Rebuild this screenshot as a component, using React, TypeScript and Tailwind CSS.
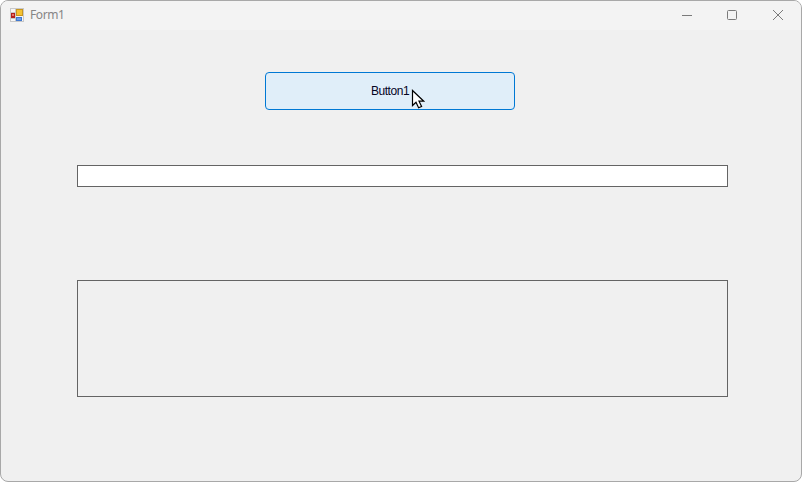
function FormIcon() {
    return (
        <svg width="14" height="14" viewBox="0 0 14 14" className="shrink-0">
            <rect x="0.5" y="0.5" width="13" height="13" fill="#f6f6f6" stroke="#c8c8c8" />
            <path d="M0 4.5H6M5.5 0V14M0 10.5H6" stroke="#c8c8c8" fill="none" />
            <rect x="1" y="5" width="4" height="5" fill="#b3201c" />
            <rect x="2" y="6" width="2" height="2" fill="#e8736a" />
            <rect x="6" y="1" width="7" height="7" fill="#c8961f" />
            <rect x="7" y="2" width="5" height="5" fill="#f4c232" />
            <rect x="6" y="9" width="6" height="4" fill="#3f78d0" />
            <rect x="7" y="10" width="4" height="2" fill="#6f9fe6" />
        </svg>
    );
}

function Cursor() {
    return (
        <svg width="14" height="20" viewBox="0 0 14 20" className="absolute left-[410px] top-[88px]">
            <path
                d="M1.5 1.5V16.5L5 13.2L7.6 18.8L10.6 17.5L8 12.2H12.8Z"
                fill="#ffffff"
                stroke="#000000"
                strokeWidth="1.2"
                strokeLinejoin="miter"
            />
        </svg>
    );
}

export default function App() {
    return (
        <div className="relative flex h-[482px] w-[802px] flex-col overflow-hidden rounded-lg border border-[#a8a8a8] bg-[#f0f0f0] font-['Liberation_Sans',sans-serif]">
            <header className="flex h-[29px] shrink-0 items-center justify-between bg-[#f3f3f3] pb-px">
                <div className="flex items-center gap-[6px] pl-[9px]">
                    <FormIcon />
                    <span className="font-['Noto_Sans',sans-serif] text-xs tracking-[-0.4px] text-[#858585]">Form1</span>
                </div>
                <div className="flex items-center gap-[35px] pr-[18px]">
                    <svg width="10" height="10" viewBox="0 0 10 10">
                        <line x1="0" y1="5.5" x2="10" y2="5.5" stroke="#7a7a7a" />
                    </svg>
                    <svg width="10" height="10" viewBox="0 0 10 10">
                        <rect x="0.5" y="0.5" width="9" height="9" rx="1" fill="none" stroke="#7a7a7a" />
                    </svg>
                    <svg width="10" height="10" viewBox="0 0 10 10" className="ml-px">
                        <path d="M0 0L10 10M10 0L0 10" stroke="#7a7a7a" />
                    </svg>
                </div>
            </header>

            <main className="flex flex-1 flex-col items-start pl-[76px] pt-[42px]">
                <button
                    type="button"
                    className="ml-[188px] flex h-[38px] w-[250px] items-center justify-center rounded-[4px] border border-[#0078d4] bg-[#e0eef9] text-xs tracking-[-0.45px] text-[#05051f]"
                >
                    Button1
                </button>
                <input
                    type="text"
                    aria-label="TextBox1"
                    className="mt-[55px] h-[22px] w-[651px] border border-[#646464] bg-white"
                />
                <div className="mt-[93px] h-[117px] w-[651px] border border-[#646464]" />
            </main>

            <Cursor />
        </div>
    );
}
